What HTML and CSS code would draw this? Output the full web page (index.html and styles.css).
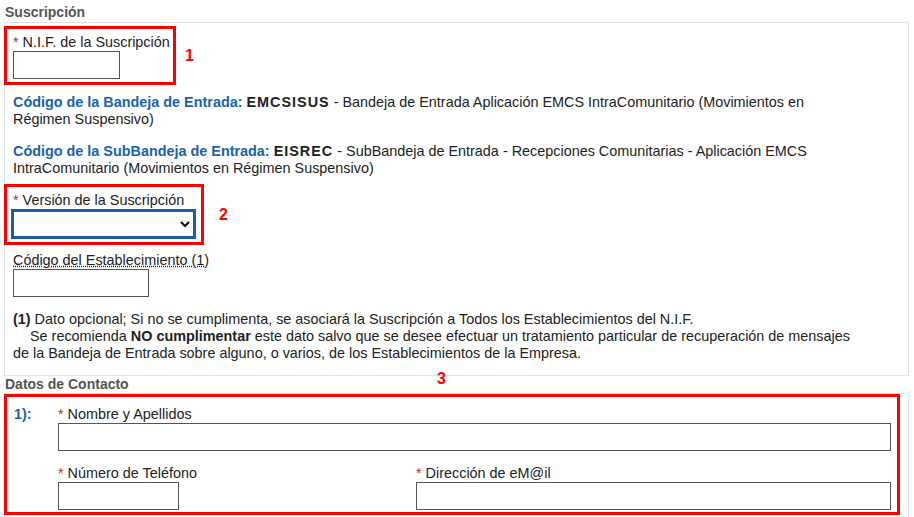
FILE: index.html
```html
<!DOCTYPE html>
<html lang="es">
    <head>
        <meta charset="utf-8">
        <link rel="stylesheet" href="styles.css">
    </head>
    <body>
        <main class="form">
            <h2 class="section-title">Suscripción</h2>
            <section class="panel panel-subs">
                <div class="mark-row">
                    <div class="mark mark-nif">
                        <label class="field-label"><span class="req">*</span> N.I.F. de la Suscripción</label>
                        <input type="text" class="inp inp-nif">
                    </div>
                    <span class="mark-num num-1">1</span>
                </div>
                <p class="info info-first"><b class="key">Código de la Bandeja de Entrada:</b> <b class="code">EMCSISUS</b> - Bandeja de Entrada Aplicación EMCS IntraComunitario (Movimientos en<br>Régimen Suspensivo)</p>
                <p class="info info-second"><b class="key">Código de la SubBandeja de Entrada:</b> <b class="code">EISREC</b> - SubBandeja de Entrada - Recepciones Comunitarias - Aplicación EMCS<br>IntraComunitario (Movimientos en Régimen Suspensivo)</p>
                <div class="mark-row mark-row-version">
                    <div class="mark mark-version">
                        <label class="field-label"><span class="req">*</span> Versión de la Suscripción</label>
                        <select class="sel-version">
                            <option></option>
                        </select>
                    </div>
                    <span class="mark-num num-2">2</span>
                </div>
                <div class="field field-estab">
                    <label class="field-label"><abbr title="Dato opcional">Código del Establecimiento (1)</abbr></label>
                    <input type="text" class="inp inp-estab">
                </div>
                <p class="note"><b>(1)</b> Dato opcional; Si no se cumplimenta, se asociará la Suscripción a Todos los Establecimientos del N.I.F.<br><span class="indent"></span>Se recomienda <b>NO cumplimentar</b> este dato salvo que se desee efectuar un tratamiento particular de recuperación de mensajes<br>de la Bandeja de Entrada sobre alguno, o varios, de los Establecimientos de la Empresa.</p>
            </section>

            <h2 class="section-title">Datos de Contacto</h2>
            <span class="mark-num num-3">3</span>
            <section class="panel panel-contact">
                <div class="mark mark-contact">
                    <span class="contact-idx">1):</span>
                    <div class="field field-name">
                        <label class="field-label"><span class="req">*</span> Nombre y Apellidos</label>
                        <input type="text" class="inp">
                    </div>
                    <div class="field field-phone">
                        <label class="field-label"><span class="req">*</span> Número de Teléfono</label>
                        <input type="text" class="inp inp-phone">
                    </div>
                    <div class="field field-mail">
                        <label class="field-label"><span class="req">*</span> Dirección de eM@il</label>
                        <input type="text" class="inp">
                    </div>
                </div>
            </section>
        </main>
    </body>
</html>
```

FILE: styles.css
```css
body{
    margin: 0;
    font-family: "Liberation Sans", Arial, sans-serif;
    font-size: 14.4px;
    line-height: 17px;
    color: #222;
    background: #fff;
}
.form{
    position: relative;
    padding-top: 4px;
}
.section-title{
    margin: 0 0 1px 5px;
    font-size: 14px;
    line-height: 17px;
    font-weight: bold;
    color: #555;
}
.panel{
    margin-left: 4px;
    width: 905px;
    box-sizing: border-box;
    border: 1px solid #dde4ed;
}
.panel-subs{
    padding: 3px 0 13px 0;
}
.panel-contact{
    padding-bottom: 10px;
    margin-top: -1px;
}

/* annotation boxes */
.mark{
    box-sizing: border-box;
    border: 3px solid #f00;
}
.mark-row{
    display: flex;
    align-items: center;
    margin-left: -1px;
}
.mark-row-version{
    margin-top: 7px;
}
.mark-num{
    color: #f00;
    font-weight: bold;
    font-size: 16px;
}
.num-1{ margin-left: 9px; }
.num-2{ margin-left: 15px; }
.num-3{
    position: absolute;
    left: 437px;
    top: 370px;
}
.mark-nif{
    width: 172px;
    padding: 5px 0 3px 6px;
}
.mark-version{
    width: 200px;
    padding: 5px 0 3px 6px;
}

.field-label{
    display: block;
    line-height: 17px;
    white-space: nowrap;
}
.req{
    color: #d42020;
}
abbr[title]{
    text-decoration: underline dotted;
}

.inp{
    display: block;
    box-sizing: border-box;
    width: 100%;
    height: 28px;
    margin: 0;
    border: 1px solid #555;
    background: #fff;
    font: inherit;
}
.inp-nif{ width: 107px; }
.inp-estab{ width: 136px; }
.inp-phone{ width: 121px; }

.sel-version{
    display: block;
    box-sizing: border-box;
    width: 185px;
    height: 30px;
    margin: 0 0 0 -2px;
    border: 3px solid #1c5d9c;
    border-radius: 0;
    background: #fff;
    font: inherit;
}

.info{
    margin: 9px 8px 0 8px;
}
.info-second{
    margin-top: 15px;
}
.key{
    color: #1a63ad;
}
.code{
    letter-spacing: 1px;
}
.field-estab{
    margin: 7px 0 0 8px;
}
.note{
    margin: 14px 8px 0 8px;
}
.indent{
    display: inline-block;
    width: 17px;
}

.mark-contact{
    display: grid;
    grid-template-columns: 44px 358px 1fr;
    row-gap: 14px;
    margin: 0 8px 0 -1px;
    padding: 9px 6px 2px 7px;
}
.contact-idx{
    grid-column: 1;
    grid-row: 1;
    color: #1a63ad;
    font-weight: bold;
}
.field-name{
    grid-column: 2 / 4;
    grid-row: 1;
}
.field-phone{
    grid-column: 2;
    grid-row: 2;
}
.field-mail{
    grid-column: 3;
    grid-row: 2;
}
```
